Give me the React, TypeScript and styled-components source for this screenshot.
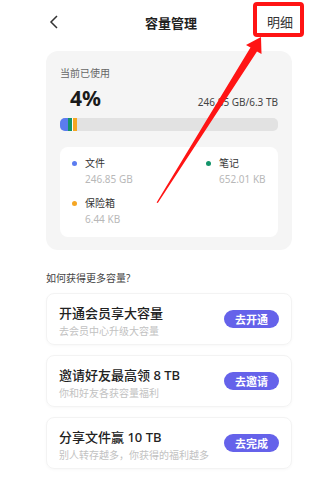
import * as React from "react";
import styled, { createGlobalStyle } from "styled-components";

const GlobalStyle = createGlobalStyle`
  body {
    margin: 0;
    background: #fff;
    font-family: "Noto Sans", "Noto Sans CJK SC", sans-serif;
  }
`;

const usage = [
  { name: "文件", value: "246.85 GB", color: "#5b7cf0" },
  { name: "笔记", value: "652.01 KB", color: "#13946a" },
  { name: "保险箱", value: "6.44 KB", color: "#f5a623" },
];

const options = [
  { title: "开通会员享大容量", desc: "去会员中心升级大容量", action: "去开通" },
  { title: "邀请好友最高领 8 TB", desc: "你和好友各获容量福利", action: "去邀请" },
  { title: "分享文件赢 10 TB", desc: "别人转存越多，你获得的福利越多", action: "去完成" },
];

const App = () => {
  return (
    <SScreen>
      <GlobalStyle />
      <SPage>
        <SHeader>
          <SBack>
            <svg width="10" height="14" viewBox="0 0 10 14">
              <polyline points="8,1 2,7 8,13" fill="none" stroke="#333" strokeWidth="1.5" />
            </svg>
          </SBack>
          <STitle>容量管理</STitle>
          <SDetail>明细</SDetail>
        </SHeader>

        <SUsageCard>
          <SLabel>当前已使用</SLabel>
          <SUsageRow>
            <SPercent>4%</SPercent>
            <STotal>246.85 GB/6.3 TB</STotal>
          </SUsageRow>
          <SBar>
            <SSegment $color="#5b7cf0" $width={8} />
            <SSegment $color="#13946a" $width={4} />
            <SSegment $color="#fff" $width={1} />
            <SSegment $color="#f5a623" $width={4} />
          </SBar>
          <SUsageGrid>
            {usage.map((item) => (
              <SUsageItem key={item.name}>
                <SItemName>
                  <SDot $color={item.color} />
                  {item.name}
                </SItemName>
                <SItemValue>{item.value}</SItemValue>
              </SUsageItem>
            ))}
          </SUsageGrid>
        </SUsageCard>

        <SSection>如何获得更多容量?</SSection>
        <SOptions>
          {options.map((opt) => (
            <SOption key={opt.action}>
              <div>
                <SOptionTitle>{opt.title}</SOptionTitle>
                <SOptionDesc>{opt.desc}</SOptionDesc>
              </div>
              <SButton>{opt.action}</SButton>
            </SOption>
          ))}
        </SOptions>
      </SPage>

      <SHighlight />
      <SArrow width="330" height="490" viewBox="0 0 330 490">
        <polygon
          points="261,37 261.5,54 257,51.5 157.8,203 156.6,202.4 250.5,47.5 246,45"
          fill="#ff1414"
        />
      </SArrow>
    </SScreen>
  );
};

export default App;

const SScreen = styled.div`
  position: relative;
  width: 330px;
  height: 490px;
  overflow: hidden;
  background: #fff;
`;

const SPage = styled.div`
  width: 246px;
  padding-left: 46px;
`;

const SHeader = styled.div`
  height: 44px;
  display: flex;
  align-items: center;
  justify-content: space-between;
`;

const SBack = styled.div`
  width: 26px;
  padding-left: 3px;
  display: flex;
  align-items: center;
`;

const STitle = styled.div`
  font-size: 13px;
  font-weight: 700;
  color: #222;
`;

const SDetail = styled.div`
  width: 26px;
  font-size: 13px;
  color: #333;
  margin-top: -2px;
  margin-right: -1px;
`;

const SUsageCard = styled.div`
  margin-top: 7px;
  background: #f5f5f5;
  border-radius: 12px;
  padding: 15px 14px 13px;
`;

const SLabel = styled.div`
  font-size: 10px;
  line-height: 14px;
  color: #666;
`;

const SUsageRow = styled.div`
  display: flex;
  align-items: baseline;
  justify-content: space-between;
  margin-top: 6px;
  padding-left: 10px;
`;

const SPercent = styled.div`
  font-size: 21px;
  line-height: 24px;
  font-weight: 700;
  color: #1a1a1a;
`;

const STotal = styled.div`
  font-size: 10px;
  color: #444;
`;

const SBar = styled.div`
  margin-top: 8px;
  height: 13px;
  border-radius: 5px;
  background: #e2e2e2;
  display: flex;
  overflow: hidden;
`;

const SSegment = styled.div<{ $color: string; $width: number }>`
  width: ${(p) => p.$width}px;
  background: ${(p) => p.$color};
`;

const SUsageGrid = styled.div`
  margin-top: 16px;
  background: #fff;
  border-radius: 8px;
  padding: 9px 0 11px 12px;
  display: grid;
  grid-template-columns: 134px 1fr;
  row-gap: 10px;
`;

const SUsageItem = styled.div`
  display: flex;
  flex-direction: column;
  gap: 2px;
`;

const SItemName = styled.div`
  display: flex;
  align-items: center;
  gap: 8px;
  font-size: 10px;
  line-height: 14px;
  color: #333;
`;

const SDot = styled.span<{ $color: string }>`
  width: 5px;
  height: 5px;
  border-radius: 50%;
  background: ${(p) => p.$color};
`;

const SItemValue = styled.div`
  padding-left: 13px;
  font-size: 10px;
  line-height: 14px;
  color: #b8b8b8;
`;

const SSection = styled.div`
  margin-top: 21px;
  font-size: 10px;
  line-height: 14px;
  color: #444;
`;

const SOptions = styled.div`
  margin-top: 8px;
  display: flex;
  flex-direction: column;
  gap: 10px;
`;

const SOption = styled.div`
  height: 52px;
  box-sizing: border-box;
  padding: 10px 12px 8px;
  border: 1px solid #f3f3f3;
  border-radius: 8px;
  box-shadow: 0 1px 3px rgba(0, 0, 0, 0.03);
  display: flex;
  align-items: flex-start;
  justify-content: space-between;
`;

const SOptionTitle = styled.div`
  font-size: 13px;
  line-height: 18px;
  font-weight: 500;
  color: #222;
`;

const SOptionDesc = styled.div`
  margin-top: 2px;
  font-size: 10px;
  line-height: 14px;
  color: #c2c2c2;
`;

const SButton = styled.div`
  margin-top: 6px;
  width: 55px;
  height: 18px;
  border-radius: 9px;
  background: #6562ea;
  color: #fff;
  font-size: 11px;
  font-weight: 700;
  display: flex;
  align-items: center;
  justify-content: center;
`;

const SHighlight = styled.div`
  position: absolute;
  left: 253px;
  top: 2px;
  width: 51px;
  height: 35px;
  box-sizing: border-box;
  border: 4px solid #ff1414;
  border-radius: 4px;
`;

const SArrow = styled.svg`
  position: absolute;
  left: 0;
  top: 0;
  pointer-events: none;
`;
